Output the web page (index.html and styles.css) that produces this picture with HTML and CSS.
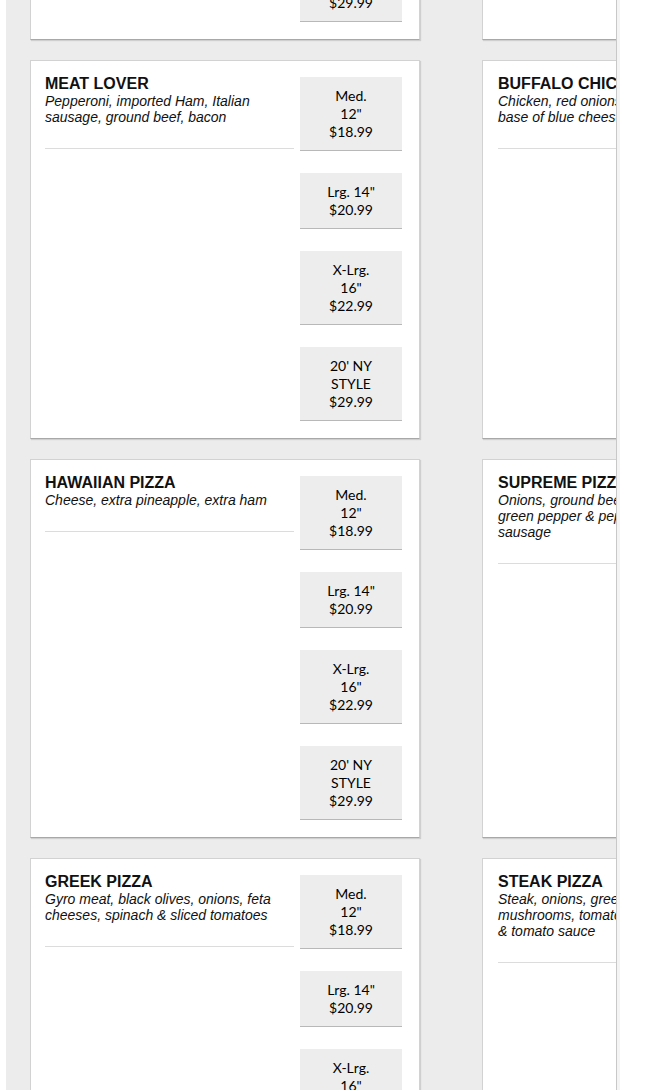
FILE: index.html
```html
<!DOCTYPE html>
<html lang="en">
<head>
 <meta charset="UTF-8">
 <meta name="viewport" content="width=device-width, initial-scale=1.0">
 <title>Specialty Pizza</title>
 <link rel="stylesheet" href="styles.css">
</head>
<body>
 <div class="menu-frame">
  <div class="menu-grid">

   <div class="item-card">
    <div class="item-info">
     <h3>CHEESE PIZZA</h3>
     <p>Our classic pizza with mozzarella cheese</p>
    </div>
    <div class="price-list">
     <div class="price-button"><span>Med.</span><span>12"</span><span>$18.99</span></div>
     <div class="price-button"><span>Lrg. 14"</span><span>$20.99</span></div>
     <div class="price-button"><span>X-Lrg.</span><span>16"</span><span>$22.99</span></div>
     <div class="price-button"><span>20' NY</span><span>STYLE</span><span>$29.99</span></div>
    </div>
   </div>

   <div class="item-card">
    <div class="item-info">
     <h3>VEGGIE PIZZA</h3>
     <p>Mushrooms, green peppers, onions, black olives, tomatoes</p>
    </div>
    <div class="price-list">
     <div class="price-button"><span>Med.</span><span>12"</span><span>$18.99</span></div>
     <div class="price-button"><span>Lrg. 14"</span><span>$20.99</span></div>
     <div class="price-button"><span>X-Lrg.</span><span>16"</span><span>$22.99</span></div>
     <div class="price-button"><span>20' NY</span><span>STYLE</span><span>$29.99</span></div>
    </div>
   </div>

   <div class="item-card">
    <div class="item-info">
     <h3>MEAT LOVER</h3>
     <p>Pepperoni, imported Ham, Italian sausage, ground beef, bacon</p>
    </div>
    <div class="price-list">
     <div class="price-button"><span>Med.</span><span>12"</span><span>$18.99</span></div>
     <div class="price-button"><span>Lrg. 14"</span><span>$20.99</span></div>
     <div class="price-button"><span>X-Lrg.</span><span>16"</span><span>$22.99</span></div>
     <div class="price-button"><span>20' NY</span><span>STYLE</span><span>$29.99</span></div>
    </div>
   </div>

   <div class="item-card">
    <div class="item-info">
     <h3>BUFFALO CHICKEN PIZZA</h3>
     <p>Chicken, red onions, tomatoes on a base of blue cheese dressing</p>
    </div>
    <div class="price-list">
     <div class="price-button"><span>Med.</span><span>12"</span><span>$18.99</span></div>
     <div class="price-button"><span>Lrg. 14"</span><span>$20.99</span></div>
     <div class="price-button"><span>X-Lrg.</span><span>16"</span><span>$22.99</span></div>
     <div class="price-button"><span>20' NY</span><span>STYLE</span><span>$29.99</span></div>
    </div>
   </div>

   <div class="item-card">
    <div class="item-info">
     <h3>HAWAIIAN PIZZA</h3>
     <p>Cheese, extra pineapple, extra ham</p>
    </div>
    <div class="price-list">
     <div class="price-button"><span>Med.</span><span>12"</span><span>$18.99</span></div>
     <div class="price-button"><span>Lrg. 14"</span><span>$20.99</span></div>
     <div class="price-button"><span>X-Lrg.</span><span>16"</span><span>$22.99</span></div>
     <div class="price-button"><span>20' NY</span><span>STYLE</span><span>$29.99</span></div>
    </div>
   </div>

   <div class="item-card">
    <div class="item-info">
     <h3>SUPREME PIZZA</h3>
     <p>Onions, ground beef, mushrooms, green pepper &amp; pepperoni, Italian sausage</p>
    </div>
    <div class="price-list">
     <div class="price-button"><span>Med.</span><span>12"</span><span>$18.99</span></div>
     <div class="price-button"><span>Lrg. 14"</span><span>$20.99</span></div>
     <div class="price-button"><span>X-Lrg.</span><span>16"</span><span>$22.99</span></div>
     <div class="price-button"><span>20' NY</span><span>STYLE</span><span>$29.99</span></div>
    </div>
   </div>

   <div class="item-card">
    <div class="item-info">
     <h3>GREEK PIZZA</h3>
     <p>Gyro meat, black olives, onions, feta cheeses, spinach &amp; sliced tomatoes</p>
    </div>
    <div class="price-list">
     <div class="price-button"><span>Med.</span><span>12"</span><span>$18.99</span></div>
     <div class="price-button"><span>Lrg. 14"</span><span>$20.99</span></div>
     <div class="price-button"><span>X-Lrg.</span><span>16"</span><span>$22.99</span></div>
     <div class="price-button"><span>20' NY</span><span>STYLE</span><span>$29.99</span></div>
    </div>
   </div>

   <div class="item-card">
    <div class="item-info">
     <h3>STEAK PIZZA</h3>
     <p>Steak, onions, green peppers, mushrooms, tomatoes, cheese<br>&amp; tomato sauce</p>
    </div>
    <div class="price-list">
     <div class="price-button"><span>Med.</span><span>12"</span><span>$18.99</span></div>
     <div class="price-button"><span>Lrg. 14"</span><span>$20.99</span></div>
     <div class="price-button"><span>X-Lrg.</span><span>16"</span><span>$22.99</span></div>
     <div class="price-button"><span>20' NY</span><span>STYLE</span><span>$29.99</span></div>
    </div>
   </div>

  </div>
 </div>
</body>
</html>
```

FILE: styles.css
```css
body {
 margin: 0;
 background-color: #ffffff;
 font-family: "Liberation Sans", Arial, sans-serif;
 color: #111111;
}

.menu-frame {
 margin-left: 6px;
 width: 610px;
 height: 1090px;
 overflow: hidden;
 background-color: #ececec;
 border-right: 1px solid #c8c8c8;
 box-shadow: 3px 0 0 #f4f4f4;
}

.menu-grid {
 display: grid;
 grid-template-columns: 390px 391px;
 column-gap: 62px;
 row-gap: 20px;
 padding-left: 24px;
 margin-top: -339px; /* the list is scrolled */
}

.item-card {
 display: flex;
 gap: 6px;
 padding: 14px 16px 17px 14px;
 background-color: #ffffff;
 border: 1px solid #d2d2d2;
 border-bottom-color: #a8a8a8;
 box-shadow: 1px 1px 1px rgba(0, 0, 0, 0.12);
}

.item-card:nth-child(even) {
 padding-left: 15px;
}

.item-info {
 flex: 0 0 249px;
 align-self: flex-start;
 padding-bottom: 23px;
 border-bottom: 1px solid #dcdcdc;
}

.item-info h3 {
 margin: 0;
 font-size: 16px;
 line-height: 18px;
 font-weight: bold;
 color: #111111;
}

.item-info p {
 margin: 0;
 font-size: 14px;
 line-height: 16px;
 font-style: italic;
 color: #111111;
}

.price-list {
 display: flex;
 flex-direction: column;
 gap: 22px;
 width: 102px;
 margin-top: 2px;
}

.price-button {
 display: flex;
 flex-direction: column;
 align-items: center;
 padding: 10px 0 9px;
 background-color: #ededed;
 border-bottom: 1px solid #b8b8b8;
 font-family: Lato, "Liberation Sans", sans-serif;
 font-size: 14px;
 line-height: 18px;
 color: #000000;
}
```
